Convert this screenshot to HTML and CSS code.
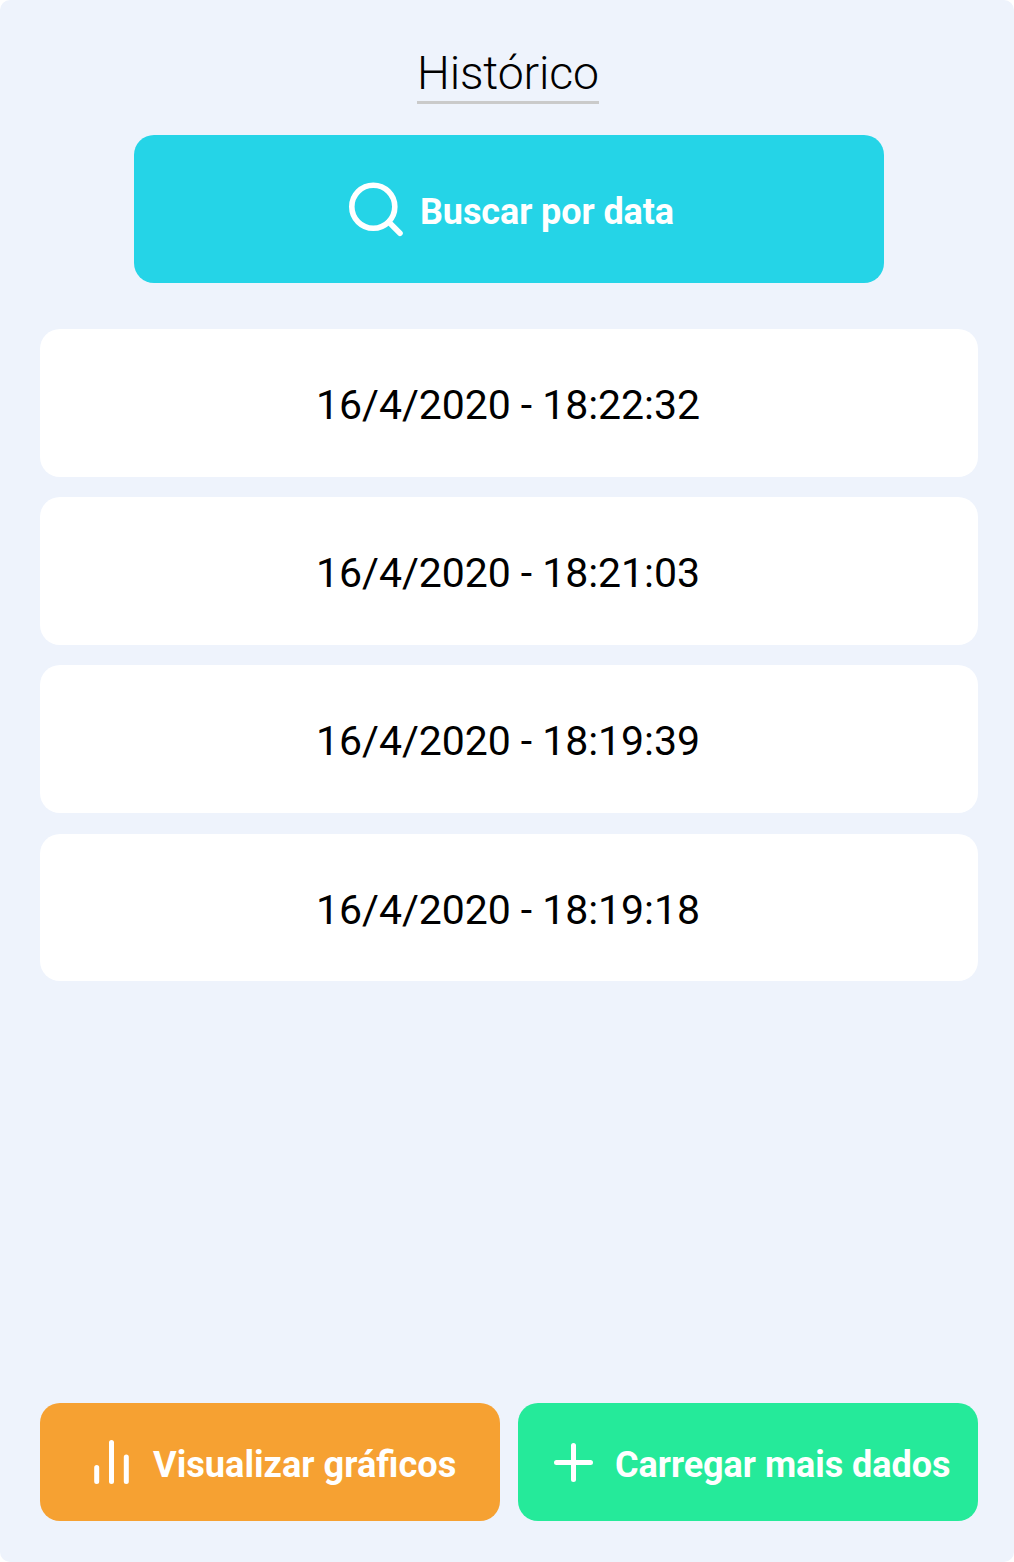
FILE: index.html
```html
<!DOCTYPE html>
<html lang="pt-BR">
<head>
<meta charset="utf-8">
<title>Histórico</title>
<link rel="stylesheet" href="styles.css">
</head>
<body>
<main class="screen">
  <h1 class="title">Histórico</h1>
  <button class="btn search">
    <svg class="icon-search" viewBox="0 0 56 56"><ellipse cx="25.300" cy="25.700" rx="21.500" ry="21.500"/><path d="M40.800 41 52 52.300"/></svg>
    <span>Buscar por data</span>
  </button>
  <ul class="list">
    <li class="entry">16/4/2020 - 18:22:32</li>
    <li class="entry">16/4/2020 - 18:21:03</li>
    <li class="entry">16/4/2020 - 18:19:39</li>
    <li class="entry">16/4/2020 - 18:19:18</li>
  </ul>
  <div class="actions">
    <button class="btn charts">
      <svg class="icon-bars" viewBox="0 0 36 46"><path d="M2.700 28.500V42.500M17.500 3.500V42.500M32.300 18V42.500"/></svg>
      <span>Visualizar gráficos</span>
    </button>
    <button class="btn more">
      <svg class="icon-plus" viewBox="0 0 40 40"><path d="M19.500 3.500V37.500M2.500 20.500H36.500"/></svg>
      <span>Carregar mais dados</span>
    </button>
  </div>
</main>
</body>
</html>
```
FILE: styles.css
```css
* {
  box-sizing: border-box;
}

body {
  margin: 0;
  background: #fff;
  font-family: Roboto, sans-serif;
}

.screen {
  display: flex;
  flex-direction: column;
  align-items: center;
  height: 1562px;
  padding: 46px 36px 41px 40px;
  background: #eef3fc;
  border-radius: 10px;
}

.title {
  width: 182px;
  height: 58px;
  margin: 0 2px 31px 0;
  border-bottom: 3px solid #cacaca;
  font-size: 46.4px;
  font-weight: 300;
  line-height: 55px;
  letter-spacing: -0.15px;
  text-align: center;
  white-space: nowrap;
}

.btn {
  display: flex;
  align-items: center;
  border: 0;
  border-radius: 20px;
  padding: 0;
  color: #fff;
  font: 700 36px/42px Roboto, sans-serif;
  white-space: nowrap;
}

.btn svg {
  flex: none;
  fill: none;
  stroke: #fff;
  stroke-width: 5;
  stroke-linecap: round;
}

.search {
  width: 750px;
  height: 148px;
  padding: 5px 0 0 214px;
  background: #25d4e7;
  letter-spacing: -0.1px;
}

.search .icon-search {
  width: 56px;
  height: 56px;
  margin: -5px 16px 0 0;
  stroke-width: 5.6;
}

.list {
  display: flex;
  flex-direction: column;
  gap: 20.6px;
  width: 100%;
  margin: 46.1px 0 0;
  padding: 0;
  list-style: none;
}

.entry {
  height: 147.6px;
  padding: 3px 2px 0 0;
  border-radius: 20px;
  background: #fff;
  font-size: 41px;
  line-height: 146px;
  letter-spacing: -0.05px;
  text-align: center;
}

.actions {
  display: flex;
  gap: 18px;
  width: 100%;
  margin-top: auto;
}

.actions .btn {
  width: 460px;
  height: 118px;
  padding-top: 5px;
}

.actions .charts {
  padding-left: 54px;
  background: #f6a132;
  letter-spacing: 0;
}

.charts span {
  font-size: 36.2px;
}

.actions .more {
  padding-left: 36px;
  background: #25ea9a;
  letter-spacing: -0.04px;
}

.icon-bars {
  width: 36px;
  height: 46px;
  margin: -5px 23px 0 0;
}

.icon-plus {
  width: 40px;
  height: 40px;
  margin: -5px 21px 0 0;
}
```
